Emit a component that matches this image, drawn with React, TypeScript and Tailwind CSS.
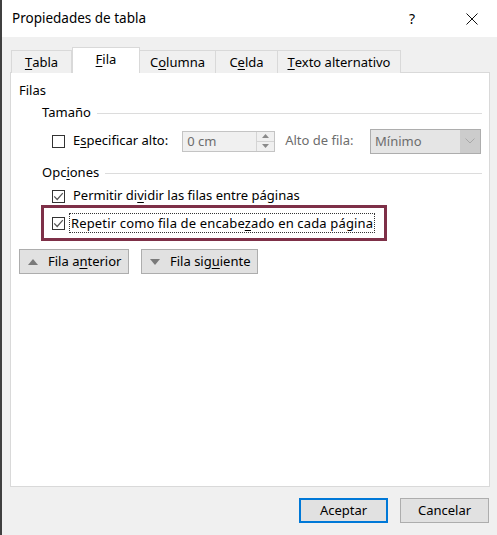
import React from "react";

const FONT = { fontFamily: '"Noto Sans", "Open Sans", sans-serif' };

// underline the mnemonic letter at index i
function Mn({ text, i }: { text: string; i: number }) {
  return (
    <>
      {text.slice(0, i)}
      <span className="underline underline-offset-2">{text[i]}</span>
      {text.slice(i + 1)}
    </>
  );
}

function CheckBox({ checked }: { checked?: boolean }) {
  return (
    <span className="w-[13px] h-[13px] border border-[#333333] bg-white flex items-center justify-center shrink-0">
      {checked && (
        <svg width="11" height="11" viewBox="0 0 11 11">
          <path d="M1.2 5.3 L4.2 8.5 L9.8 2.2" fill="none" stroke="#555555" strokeWidth="1.2" />
        </svg>
      )}
    </span>
  );
}

function GroupHeader({ children }: { children: React.ReactNode }) {
  return (
    <div className="flex items-center gap-[6px] pl-[31px] pr-[7px] h-[20px]">
      <span>{children}</span>
      <span className="flex-1 h-px bg-[#dcdcdc]" />
    </div>
  );
}

const tabs = [
  { text: "Tabla", i: 0, w: 61 },
  { text: "Fila", i: 0, w: 68, active: true },
  { text: "Columna", i: 1, w: 77 },
  { text: "Celda", i: 1, w: 63 },
  { text: "Texto alternativo", i: 0, w: 124 },
];

export default function App() {
  return (
    <div
      className="w-[497px] h-[535px] bg-[#f0f0f0] border-l-2 border-[#404040] flex flex-col text-[13px] text-black overflow-hidden"
      style={FONT}
    >
      {/* title bar */}
      <div className="h-[37px] bg-white flex items-center pl-[10px] shrink-0">
        <span className="text-[13.5px]">Propiedades de tabla</span>
        <span className="ml-auto mr-[51px] text-[14px]">?</span>
        <svg width="12" height="12" viewBox="0 0 12 12" className="mr-[19px]">
          <path d="M0.5 0.5 L11.5 11.5 M11.5 0.5 L0.5 11.5" stroke="#111" strokeWidth="1" />
        </svg>
      </div>

      <div className="flex-1 flex flex-col pl-[8px] pr-[7px] pt-[10px]">
        {/* tabs */}
        <div className="flex items-end h-[26px] pl-[1px] -mb-px relative z-10">
          {tabs.map((t) =>
            t.active ? (
              <div
                key={t.text}
                className="h-[26px] bg-white border border-b-0 border-[#d9d9d9] flex items-center justify-center pb-[2px]"
                style={{ width: t.w }}
              >
                <Mn text={t.text} i={t.i} />
              </div>
            ) : (
              <div
                key={t.text}
                className="h-[23px] bg-[#f0f0f0] border border-b-0 border-[#d9d9d9] -ml-px first:ml-0 flex items-center justify-center pt-[2px]"
                style={{ width: t.w }}
              >
                <Mn text={t.text} i={t.i} />
              </div>
            )
          )}
        </div>

        {/* panel */}
        <div className="h-[415px] bg-white border border-[#d9d9d9] flex flex-col pt-[8px]">
          <div className="pl-[8px] h-[20px] flex items-center">Filas</div>
          <div className="mt-[2px]">
            <GroupHeader>Tamaño</GroupHeader>
          </div>

          <div className="flex items-center h-[26px] mt-[5px] pl-[41px] pr-[7px]">
            <CheckBox />
            <span className="ml-[8px]">
              <Mn text="Especificar alto:" i={1} />
            </span>
            <div className="ml-[14px] w-[93px] h-[21px] border border-[#c4c4c4] bg-[#f0f0f0] flex">
              <span className="flex-1 pl-[4px] text-[#6d6d6d] leading-[19px]">0 cm</span>
              <span className="w-[18px] border-l border-[#d4d4d4] flex flex-col">
                <span className="flex-1 flex items-center justify-center border-b border-[#d4d4d4]">
                  <svg width="7" height="4" viewBox="0 0 7 4">
                    <path d="M0 4 L3.5 0 L7 4 Z" fill="#8a8a8a" />
                  </svg>
                </span>
                <span className="flex-1 flex items-center justify-center">
                  <svg width="7" height="4" viewBox="0 0 7 4">
                    <path d="M0 0 L3.5 4 L7 0 Z" fill="#8a8a8a" />
                  </svg>
                </span>
              </span>
            </div>
            <span className="ml-[10px] text-[#6d6d6d]">Alto de fila:</span>
            <div className="ml-auto mr-[1px] w-[111px] h-[25px] border border-[#adadad] bg-[#e5e5e5] flex">
              <span className="flex-1 pl-[4px] text-[#6d6d6d] leading-[23px]">Mínimo</span>
              <span className="w-[20px] bg-[#cccccc] flex items-center justify-center">
                <svg width="10" height="6" viewBox="0 0 10 6">
                  <path d="M0.5 0.5 L5 5 L9.5 0.5" fill="none" stroke="#a8a8a8" strokeWidth="1" />
                </svg>
              </span>
            </div>
          </div>

          <div className="mt-[9px]">
            <GroupHeader>
              <Mn text="Opciones" i={3} />
            </GroupHeader>
          </div>

          <div className="flex items-center h-[18px] mt-[4px] pl-[41px]">
            <CheckBox checked />
            <span className="ml-[8px]">
              <Mn text="Permitir dividir las filas entre páginas" i={11} />
            </span>
          </div>

          <div className="ml-[30px] w-[346px] h-[36px] border-[3px] border-[#7e3048] flex items-center pl-[8px]">
            <CheckBox checked />
            <span className="ml-[4px] px-[1px] border border-dotted border-[#333] leading-[18px] tracking-[0.15px]">
              <Mn text="Repetir como fila de encabezado en cada página" i={27} />
            </span>
          </div>

          <div className="flex gap-[12px] pl-[8px] mt-[8px]">
            <button className="w-[110px] h-[25px] bg-[#e1e1e1] border border-[#adadad] flex items-center pl-[8px] gap-[10px]">
              <svg width="10" height="6" viewBox="0 0 10 6">
                <path d="M0 6 L5 0 L10 6 Z" fill="#7a7a7a" />
              </svg>
              <span>
                <Mn text="Fila anterior" i={6} />
              </span>
            </button>
            <button className="w-[117px] h-[25px] bg-[#e1e1e1] border border-[#adadad] flex items-center pl-[8px] gap-[10px]">
              <svg width="10" height="6" viewBox="0 0 10 6">
                <path d="M0 0 L5 6 L10 0 Z" fill="#7a7a7a" />
              </svg>
              <span>
                <Mn text="Fila siguiente" i={8} />
              </span>
            </button>
          </div>
        </div>

        {/* footer buttons */}
        <div className="flex justify-end gap-[12px] mt-[11px] pr-[1px]">
          <button className="w-[89px] h-[25px] bg-[#e1e1e1] border-2 border-[#0078d7]">Aceptar</button>
          <button className="w-[89px] h-[25px] bg-[#e1e1e1] border border-[#adadad]">Cancelar</button>
        </div>
      </div>
    </div>
  );
}
